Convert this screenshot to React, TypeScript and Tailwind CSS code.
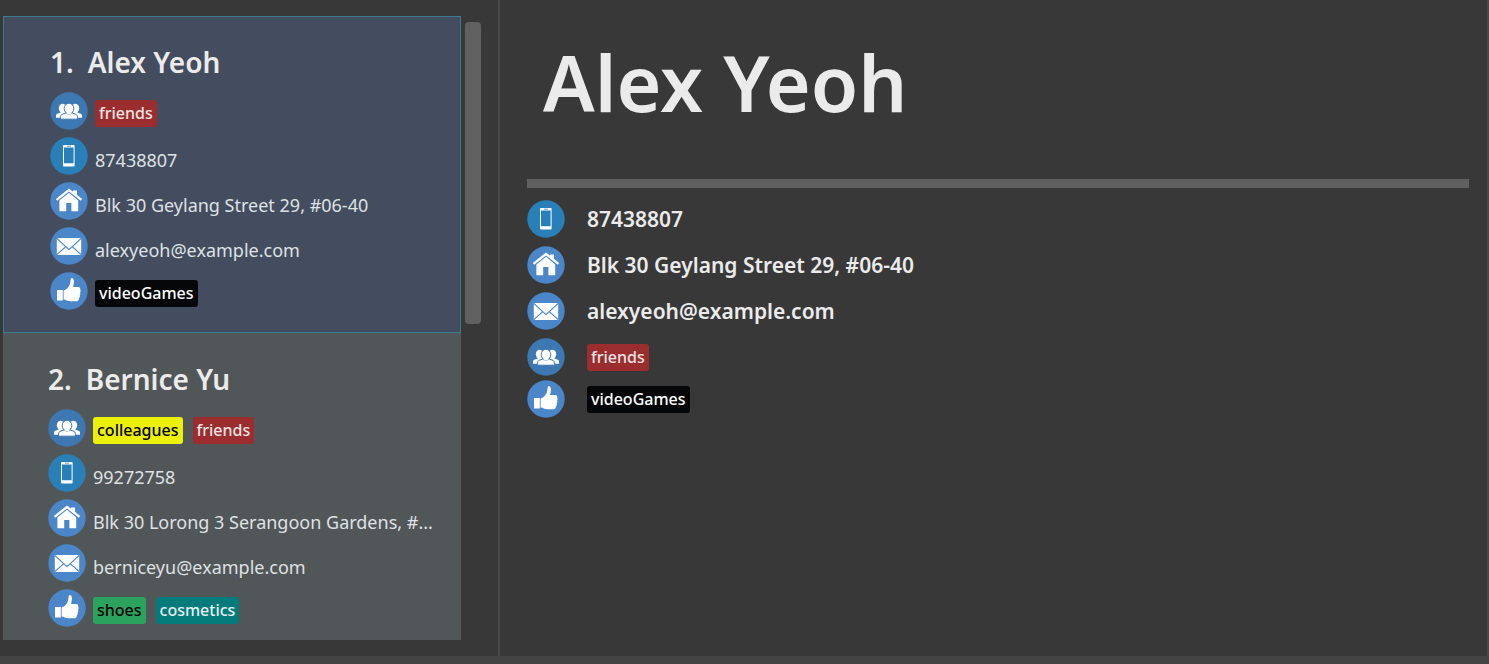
import type { ReactNode } from "react";

type IconName = "group" | "phone" | "home" | "mail" | "like";

const discs: Record<IconName, string> = {
  group: "#3d78b2",
  phone: "#2980b9",
  home: "#4a86c8",
  mail: "#4a86c8",
  like: "#4a86c8",
};

const glyphs: Record<IconName, ReactNode> = {
  group: (
    <g fill="#fff">
      <ellipse cx="12.6" cy="16.2" rx="3.8" ry="4.5" />
      <ellipse cx="25.4" cy="16.2" rx="3.8" ry="4.5" />
      <path d="M6 25.8v-2.4c0-1 .8-1.6 2-2l3-1.2v-2h4v7.6zM32 25.8v-2.4c0-1-.8-1.6-2-2l-3-1.2v-2h-4v7.6z" />
      <g stroke="#3d78b2" strokeWidth="1">
        <path d="M10.6 27.2v-2.8c0-1.3 1-1.9 2.4-2.4l3.8-1.4v-2h4.4v2l3.8 1.4c1.4.5 2.4 1.1 2.4 2.4v2.8z" />
        <ellipse cx="19" cy="16.6" rx="4.8" ry="5.4" />
      </g>
      <path d="M16.8 19h4.4v3h-4.4z" />
    </g>
  ),
  phone: (
    <path
      fill="#fff"
      fillRule="evenodd"
      d="M13.8 8h10a.8.8 0 0 1 .8.8v20a.8.8 0 0 1-.8.8h-10a.8.8 0 0 1-.8-.8v-20a.8.8 0 0 1 .8-.8zm.2 2.6v15.6h9.6V10.6zM17 8.8v.8h4v-.8z"
    />
  ),
  home: (
    <g fill="#fff">
      <path d="M23 8.6h4v6.5l-4-3.5z" />
      <path d="M19 6.4 5.8 16.9l1.5 1.8L19 9.4l11.7 9.3 1.5-1.8z" />
      <path d="M19 10.8 9.4 18.6v10.6h6.8v-8.2h5.2v8.2h6.8V18.6z" />
    </g>
  ),
  mail: (
    <g>
      <path fill="#fff" d="M6.8 11h24.4v17H6.8z" />
      <path
        d="m6.8 11.4 9.7 9 2.5 2 2.5-2 9.7-9M6.8 27.6l9-8M31.2 27.6l-9-8"
        fill="none"
        stroke="#4a86c8"
        strokeWidth="1.2"
      />
    </g>
  ),
  like: (
    <path
      fill="#fff"
      d="M7 18h5.8v10.4H7zM13.6 18.6c2.6-.8 4.8-3 6-5.6.8-1.8.8-3.6 1-5.4.2-1.6 1.4-2.2 2.3-1.2 1.8 2 1.1 5.6.1 8.6h5c1.8 0 2.6 1.2 2.2 2.6.6 1 .5 2.2-.1 3 .5 1.1.3 2.2-.4 3 .4 1.2 0 2.2-.8 2.8 0 1.9-.9 2.8-2.8 2.8h-5.6c-3 0-4.4-1.6-6.9-1.7z"
    />
  ),
};

function Icon({ name }: { name: IconName }) {
  return (
    <svg viewBox="0 0 38 38" className="size-[38px] shrink-0" aria-hidden="true">
      <circle cx="19" cy="19" r="18.7" fill={discs[name]} />
      {glyphs[name]}
    </svg>
  );
}

const tagStyles: Record<string, string> = {
  friends: "bg-[#9b2d2f] text-[#f0e4e4]",
  colleagues: "bg-[#ecf00a] text-black",
  videoGames: "bg-[#050608] text-white",
  shoes: "bg-[#2ba35f] text-black",
  cosmetics: "bg-[#047b7b] text-[#e8f0f0]",
};

function Tags({ names }: { names: string[] }) {
  return (
    <ul className="flex gap-2.5">
      {names.map((n) => (
        <li
          key={n}
          className={`h-[27px] rounded-[3px] px-1 text-[16px] leading-[26px] font-medium ${tagStyles[n]}`}
        >
          {n}
        </li>
      ))}
    </ul>
  );
}

interface Person {
  name: string;
  groups: string[];
  phone: string;
  address: string;
  email: string;
  likes: string[];
}

const people: Person[] = [
  {
    name: "Alex Yeoh",
    groups: ["friends"],
    phone: "87438807",
    address: "Blk 30 Geylang Street 29, #06-40",
    email: "alexyeoh@example.com",
    likes: ["videoGames"],
  },
  {
    name: "Bernice Yu",
    groups: ["colleagues", "friends"],
    phone: "99272758",
    address: "Blk 30 Lorong 3 Serangoon Gardens, #...",
    email: "berniceyu@example.com",
    likes: ["shoes", "cosmetics"],
  },
];

function CardRow({ icon, children }: { icon: IconName; children: ReactNode }) {
  return (
    <div className="flex h-[45px] items-start gap-[7px]">
      <Icon name={icon} />
      {children}
    </div>
  );
}

function CardText({ children }: { children: ReactNode }) {
  return <p className="pt-[9px] text-[18px] leading-7 whitespace-nowrap text-[#dfe1e4]">{children}</p>;
}

function Card({ person, index, selected }: { person: Person; index: number; selected: boolean }) {
  return (
    <li
      className={
        selected
          ? "h-[317px] border border-[#3a7b90] bg-[#434d5f] pt-[26px] pr-3 pl-[46px]"
          : "h-[307px] bg-[#515658] pt-[27px] pr-3 pl-[45px]"
      }
    >
      <h2 className="flex h-[49px] gap-3.5 text-[28px] leading-[38px] font-semibold text-[#ebebeb]">
        <span>{index}.</span>
        <span>{person.name}</span>
      </h2>
      <CardRow icon="group">
        <div className="pt-2">
          <Tags names={person.groups} />
        </div>
      </CardRow>
      <CardRow icon="phone">
        <CardText>{person.phone}</CardText>
      </CardRow>
      <CardRow icon="home">
        <CardText>{person.address}</CardText>
      </CardRow>
      <CardRow icon="mail">
        <CardText>{person.email}</CardText>
      </CardRow>
      <CardRow icon="like">
        <div className="pt-2">
          <Tags names={person.likes} />
        </div>
      </CardRow>
    </li>
  );
}

function DetailRow({ icon, children }: { icon: IconName; children: ReactNode }) {
  return (
    <div className="flex items-center gap-[22px] text-[21px] leading-[38px] font-semibold text-[#ebebeb]">
      <Icon name={icon} />
      {children}
    </div>
  );
}

export default function App() {
  const current = people[0];
  return (
    <div className="flex min-h-screen flex-col bg-[#383838] font-['Noto_Sans','Open_Sans',sans-serif]">
      <div className="flex grow">
        <aside className="flex w-[34%] max-w-[500px] gap-1 border-r-2 border-[#4a4a4a] pt-4 pr-[17px] pb-4 pl-[3px]">
          <ul className="min-w-0 grow">
            {people.map((p, i) => (
              <Card key={p.name} person={p} index={i + 1} selected={p === current} />
            ))}
          </ul>
          <div className="w-4 shrink-0 pt-1.5">
            <div className="h-[302px] rounded-[4px] bg-[#606060]" />
          </div>
        </aside>
        <main className="grow border-r-2 border-[#484848] pr-[18px] pl-[27px]">
          <h1 className="h-[179px] pt-[30px] pl-4 text-[77px] leading-[106px] font-semibold text-[#ebebeb]">
            {current.name}
          </h1>
          <hr className="mb-3 h-[9px] border-0 bg-[#606060]" />
          <div className="flex flex-col gap-2">
            <DetailRow icon="phone">
              <p>{current.phone}</p>
            </DetailRow>
            <DetailRow icon="home">
              <p>{current.address}</p>
            </DetailRow>
            <DetailRow icon="mail">
              <p>{current.email}</p>
            </DetailRow>
            <div className="flex flex-col gap-1">
              <DetailRow icon="group">
                <Tags names={current.groups} />
              </DetailRow>
              <DetailRow icon="like">
                <Tags names={current.likes} />
              </DetailRow>
            </div>
          </div>
        </main>
      </div>
      <footer className="h-2 bg-[#444444]" />
    </div>
  );
}
